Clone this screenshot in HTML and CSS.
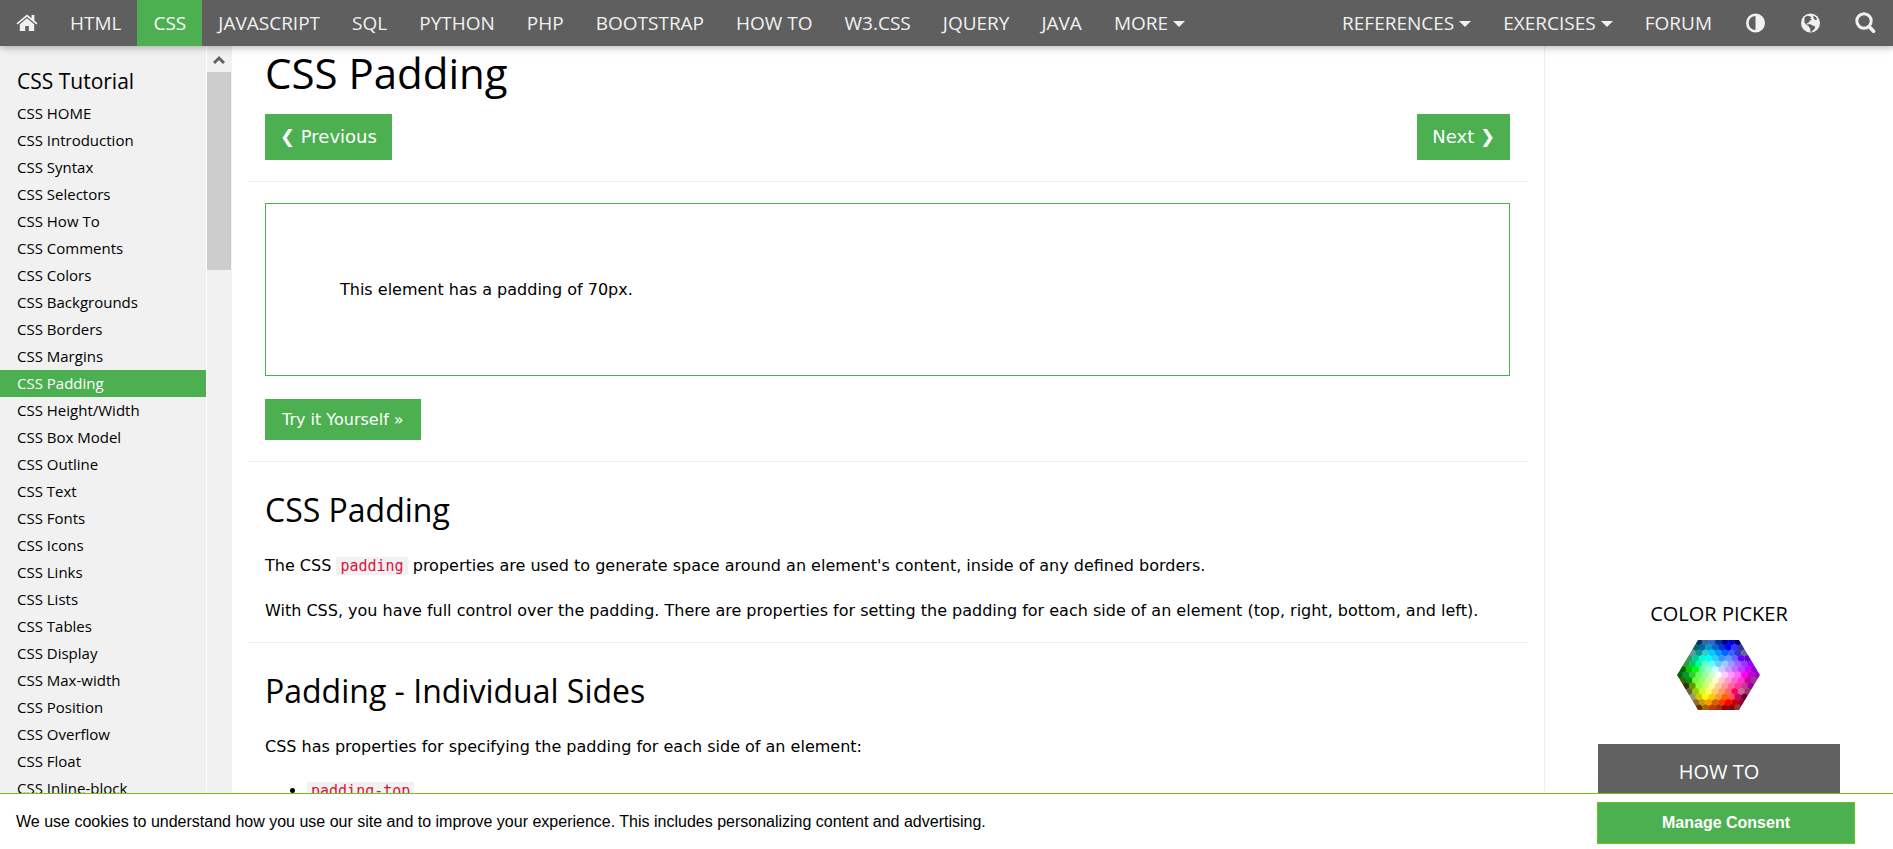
FILE: index.html
```html
<!DOCTYPE html>
<html lang="en">
<head>
<meta charset="utf-8">
<title>CSS Padding</title>
<link rel="stylesheet" href="styles.css">
</head>
<body>
<header class="topnav">
  <nav class="nav-group" aria-label="Tutorials">
    <a class="nav-link nav-home" href="#" aria-label="Home"><svg width="22" height="18" viewBox="0 0 22 18" fill="currentColor" aria-hidden="true"><path d="M11 4.200 3.800 10.200V17h5.400v-5h3.600v5h5.400v-6.800z"/><path d="M11 .5.500 9.200l1.100 1.300L11 2.800l9.400 7.700 1.100-1.300-3.100-2.600V1h-2.800v3.300z"/></svg></a>
    <a class="nav-link" href="#">HTML</a>
    <a class="nav-link nav-active" href="#">CSS</a>
    <a class="nav-link" href="#">JAVASCRIPT</a>
    <a class="nav-link" href="#">SQL</a>
    <a class="nav-link" href="#">PYTHON</a>
    <a class="nav-link" href="#">PHP</a>
    <a class="nav-link" href="#">BOOTSTRAP</a>
    <a class="nav-link" href="#">HOW TO</a>
    <a class="nav-link" href="#">W3.CSS</a>
    <a class="nav-link" href="#">JQUERY</a>
    <a class="nav-link" href="#">JAVA</a>
    <a class="nav-link" href="#">MORE<span class="caret"></span></a>
  </nav>
  <nav class="nav-group" aria-label="Site">
    <a class="nav-link" href="#">REFERENCES<span class="caret"></span></a>
    <a class="nav-link" href="#">EXERCISES<span class="caret"></span></a>
    <a class="nav-link" href="#">FORUM</a>
    <button class="nav-icon" type="button" aria-label="Toggle contrast"><svg width="21" height="20" viewBox="0 0 21 20" aria-hidden="true"><circle cx="10.500" cy="10" r="8.200" fill="none" stroke="currentColor" stroke-width="2.600"/><path d="M10.500 1a9 9 0 0 1 0 18z" fill="currentColor"/></svg></button>
    <button class="nav-icon" type="button" aria-label="Translate"><svg width="21" height="20" viewBox="0 0 21 20" aria-hidden="true"><circle cx="10.500" cy="10" r="9.500" fill="currentColor"/><path d="M4.500 4.500 7 2.800l3 .4 1.500 1.300-1.300 1 1.600 1.300-2.200 1.300L8.200 10l-1.600.2.900 1.600 2.200-.8 3 1.400 2.600 1-.8 2.600-1.800 1.600-1.300 1.400-1.200-.4.200-2.600-1.600-2.400-2.600-2-1.800-2.200z" fill="#5f5f5f"/><path d="M13 2.500l2.400 1.200 1.800 2.300-1.600 1.200-1.800-1.400z" fill="#5f5f5f"/></svg></button>
    <button class="nav-icon" type="button" aria-label="Search"><svg width="21" height="22" viewBox="0 0 21 22" fill="none" stroke="currentColor" aria-hidden="true"><circle cx="9" cy="9" r="7.200" stroke-width="3"/><path d="M14.500 15l4 4.200" stroke-width="3.600" stroke-linecap="round"/></svg></button>
  </nav>
</header>
<div class="layout">
  <aside class="sidebar">
    <nav class="menu" aria-labelledby="menu-title">
      <h2 class="menu-title" id="menu-title">CSS Tutorial</h2>
      <a class="menu-link" href="#">CSS HOME</a>
      <a class="menu-link" href="#">CSS Introduction</a>
      <a class="menu-link" href="#">CSS Syntax</a>
      <a class="menu-link" href="#">CSS Selectors</a>
      <a class="menu-link" href="#">CSS How To</a>
      <a class="menu-link" href="#">CSS Comments</a>
      <a class="menu-link" href="#">CSS Colors</a>
      <a class="menu-link" href="#">CSS Backgrounds</a>
      <a class="menu-link" href="#">CSS Borders</a>
      <a class="menu-link" href="#">CSS Margins</a>
      <a class="menu-link menu-active" href="#" aria-current="page">CSS Padding</a>
      <a class="menu-link" href="#">CSS Height/Width</a>
      <a class="menu-link" href="#">CSS Box Model</a>
      <a class="menu-link" href="#">CSS Outline</a>
      <a class="menu-link" href="#">CSS Text</a>
      <a class="menu-link" href="#">CSS Fonts</a>
      <a class="menu-link" href="#">CSS Icons</a>
      <a class="menu-link" href="#">CSS Links</a>
      <a class="menu-link" href="#">CSS Lists</a>
      <a class="menu-link" href="#">CSS Tables</a>
      <a class="menu-link" href="#">CSS Display</a>
      <a class="menu-link" href="#">CSS Max-width</a>
      <a class="menu-link" href="#">CSS Position</a>
      <a class="menu-link" href="#">CSS Overflow</a>
      <a class="menu-link" href="#">CSS Float</a>
      <a class="menu-link" href="#">CSS Inline-block</a>
    </nav>
    <div class="scrollbar" aria-hidden="true">
      <svg class="scroll-arrow" width="12" height="10" viewBox="0 0 12 10" fill="none" stroke="#606060" stroke-width="3"><path d="M1 8l5-5 5 5"/></svg>
      <div class="scroll-thumb"></div>
    </div>
  </aside>
  <main class="content">
    <h1 class="title">CSS Padding</h1>
    <div class="pager">
      <a class="btn btn-page" href="#">❮ Previous</a>
      <a class="btn btn-page" href="#">Next ❯</a>
    </div>
    <hr class="rule">
    <div class="example">This element has a padding of 70px.</div>
    <a class="btn btn-try" href="#">Try it Yourself »</a>
    <hr class="rule">
    <h2 class="heading">CSS Padding</h2>
    <p class="text">The CSS <code class="code">padding</code> properties are used to generate space around an element's content, inside of any defined borders.</p>
    <p class="text">With CSS, you have full control over the padding. There are properties for setting the padding for each side of an element (top, right, bottom, and left).</p>
    <hr class="rule">
    <h2 class="heading">Padding - Individual Sides</h2>
    <p class="text">CSS has properties for specifying the padding for each side of an element:</p>
    <ul class="list">
      <li><code class="code">padding-top</code></li>
    </ul>
  </main>
  <aside class="rail">
    <a class="picker" href="#">COLOR PICKER
      <svg class="hexmap" id="hexmap" width="83" height="70" viewBox="0 0 83 70" aria-hidden="true"><defs><clipPath id="hexclip"><path d="M21 0h41l21 35-21 35H21L0 35z"/></clipPath></defs><g clip-path="url(#hexclip)" id="cells"></g></svg>
    </a>
    <h2 class="howto">HOW TO</h2>
  </aside>
</div>
<section class="cookies" aria-label="Cookies">
  <p class="cookie-text">We use cookies to understand how you use our site and to improve your experience. This includes personalizing content and advertising.</p>
  <button class="consent" type="button">Manage Consent</button>
</section>
<script src="hexmap.js"></script>
</body>
</html>
```
FILE: styles.css
```css
* { box-sizing: border-box; }

body {
  margin: 0;
  height: 100vh;
  display: flex;
  flex-direction: column;
  overflow: hidden;
  background: #fff;
  color: #000;
  font-family: "DejaVu Sans", Verdana, sans-serif;
  font-size: 16px;
  line-height: 25px;
}

a { color: inherit; text-decoration: none; }

.topnav {
  position: relative;
  z-index: 2;
  flex: none;
  display: flex;
  justify-content: space-between;
  background: #5f5f5f;
  color: #f1f1f1;
  box-shadow: 0 2px 5px rgba(0, 0, 0, .16), 0 2px 10px rgba(0, 0, 0, .12);
  font-family: "Open Sans", "Noto Sans", sans-serif;
  font-size: 19px;
  line-height: 46px;
}

.nav-group { display: flex; white-space: nowrap; }
.nav-link { display: flex; align-items: center; padding: 0 16px; }
.nav-active { background: #4caf50; color: #fff; }

.nav-icon {
  display: flex;
  align-items: center;
  padding: 0 17px;
  border: 0;
  background: none;
  color: inherit;
}

.caret {
  margin: 2px 0 0 5px;
  border: 6px solid transparent;
  border-top-color: currentColor;
  border-bottom: 0;
}

.layout { flex: 1; min-height: 0; display: flex; }

.sidebar {
  flex: none;
  width: 232px;
  display: flex;
  overflow: hidden;
  background: #f1f1f1;
}

.menu {
  flex: 1;
  font-family: "Open Sans", "Noto Sans", sans-serif;
  border-right: 1px solid #fff;
}

.menu-title {
  margin: 20px 0 4px;
  padding: 0 17px;
  font-size: 21px;
  line-height: 30px;
  font-weight: 400;
}

.menu-link { display: block; padding: 0 17px; font-size: 15px; line-height: 27px; }
.menu-active { background: #4caf50; color: #fff; }

.scrollbar {
  width: 25px;
  display: flex;
  flex-direction: column;
  align-items: center;
  gap: 7px;
  padding: 9px 1px 0 0;
}

.scroll-arrow { flex: none; }
.scroll-thumb { flex: none; width: 24px; height: 198px; background: #cdcdcd; }

.content { flex: 1; min-width: 0; overflow: hidden; padding: 0 34px 0 33px; }

.title, .heading, .howto { font-family: "Open Sans", "Noto Sans", sans-serif; font-weight: 400; }
.title { margin: 0 0 14px; font-size: 42px; line-height: 54px; }
.heading { margin: 25px 0 20px; font-size: 32px; line-height: 46px; }

.pager { display: flex; justify-content: space-between; margin-bottom: 21px; }
.btn { display: inline-block; background: #4caf50; color: #fff; }
.btn-page { padding: 0 15px; font-size: 18px; line-height: 46px; }
.btn-try { margin-bottom: 2px; padding: 0 17px; line-height: 41px; }

.rule { margin: 19px -17px 21px; border: 0; border-top: 1px solid #eee; }
.example { margin-bottom: 23px; padding: 73px 74px; border: 1px solid #4caf50; }
.text { margin: 0 0 19px; }
.code { padding: 0 4px; background: #f1f1f1; color: #dc143c; font-family: "DejaVu Sans Mono", monospace; font-size: 15px; }
.list { margin: 0; padding-left: 42px; }

.rail {
  flex: none;
  width: 349px;
  display: flex;
  flex-direction: column;
  align-items: center;
  border-left: 1px solid #eee;
  padding-top: 554px;
}

.picker {
  display: flex;
  flex-direction: column;
  align-items: center;
  gap: 12px;
  font-family: "Open Sans", "Noto Sans", sans-serif;
  font-size: 20px;
  line-height: 28px;
}

.howto {
  width: 242px;
  margin: 34px 0 0;
  background: #616161;
  color: #fff;
  font-size: 20px;
  line-height: 56px;
  text-align: center;
}

.cookies {
  position: relative;
  z-index: 2;
  flex: none;
  display: flex;
  justify-content: space-between;
  padding: 8px 38px 5px 16px;
  border-top: 1px solid #6cc021;
  background: #fff;
  font-family: "Liberation Sans", Arial, sans-serif;
}

.cookie-text { margin: 0; line-height: 40px; }

.consent {
  width: 258px;
  height: 42px;
  border: 1px solid #6cc021;
  background: #4caf50;
  color: #fff;
  font: bold 16px "Liberation Sans", Arial, sans-serif;
}
```
FILE: hexmap.js
```js
// Rows of the honeycomb colour map, top to bottom.
const rows = [
  "036 369 36C 039 009 00C 006",
  "066 069 09C 06C 03C 00F 33F 339",
  "699 099 3CC 0CF 09F 06F 36F 33C 669",
  "396 0C9 0FC 0FF 3CF 39F 69F 66F 60F 60C",
  "393 0C6 0F9 6FC 6FF 6CF 9CF 99F 96F 93F 90F",
  "060 0C0 0F0 6F9 9FC CFF CCF C9F C6F C3F C0F 90C",
  "060 093 3C3 6F6 9F9 CFC FFF FCF F9F F6F F0F C0C 90C",
  "360 090 6F3 9F6 CF9 FFC FCC F9C F6C F3C C09 939",
  "330 690 9F3 CF6 FF9 FC9 F99 F69 F39 C39 909",
  "663 9C0 CF3 FF6 FC6 F96 F66 F06 C69 936",
  "996 CC0 FF0 FC0 F93 F60 F55 C06 603",
  "963 C90 F90 C60 F30 F00 C00 903",
  "630 960 C30 930 900 800 933"
];
const cells = document.getElementById("cells");
rows.forEach((row, r) => {
  const colors = row.split(" ");
  colors.forEach((color, c) => {
    const x = 41.5 + (c - (colors.length - 1) / 2) * 6.5;
    const y = 35 + (r - 6) * 5.5;
    const hex = document.createElementNS("http://www.w3.org/2000/svg", "path");
    hex.setAttribute("d", `M${x} ${y - 3.8}l3.4 1.9v3.8l-3.4 1.9-3.4-1.9v-3.8z`);
    hex.setAttribute("fill", "#" + color);
    cells.append(hex);
  });
});
```
